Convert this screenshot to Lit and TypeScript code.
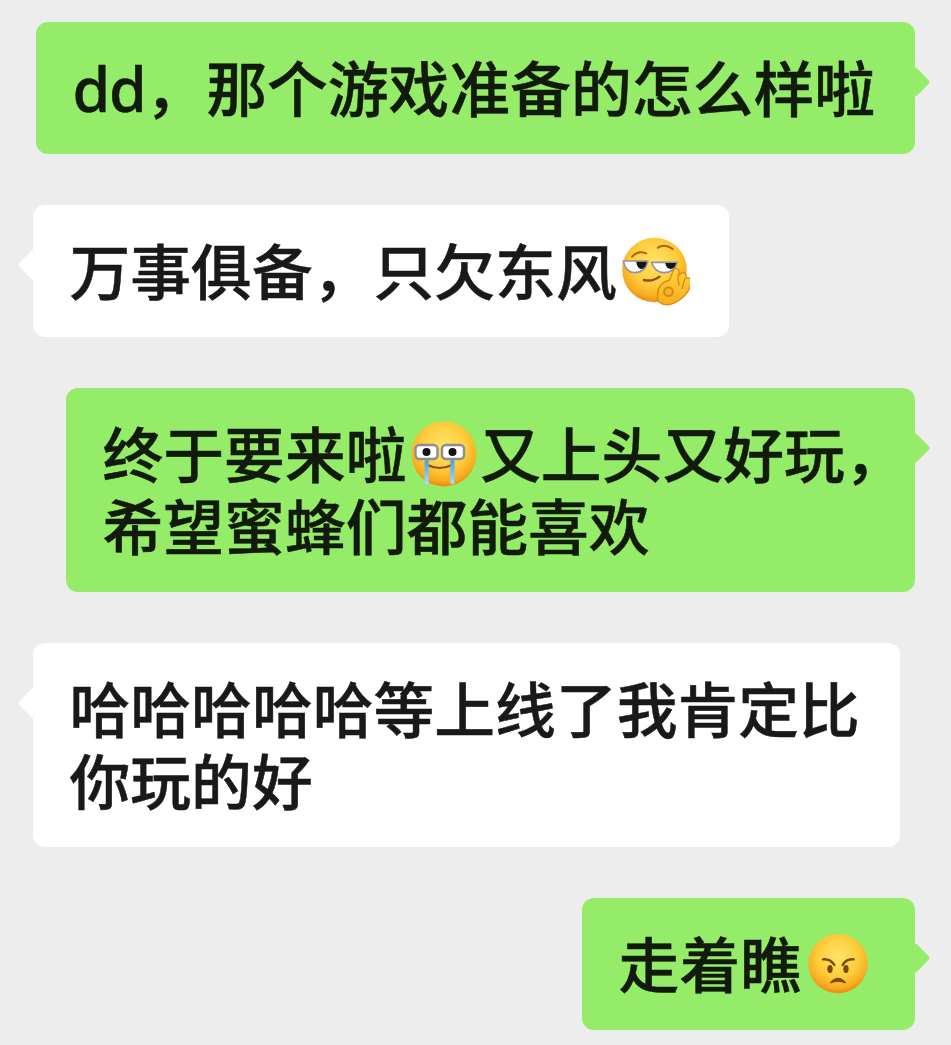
import { LitElement, html, css, svg } from "lit";
import { customElement } from "lit/decorators.js";

const defs = svg`
  <defs>
    <radialGradient id="face" cx="50%" cy="38%" r="60%">
      <stop offset="0" stop-color="#ffe56a"/>
      <stop offset="0.6" stop-color="#fdcb3a"/>
      <stop offset="0.88" stop-color="#f8ad20"/>
      <stop offset="1" stop-color="#ef9015"/>
    </radialGradient>
    <linearGradient id="hand" x1="0" y1="0" x2="0" y2="1">
      <stop offset="0" stop-color="#ffd23f"/>
      <stop offset="1" stop-color="#f8ae1c"/>
    </linearGradient>
    <linearGradient id="tear" x1="0" y1="0" x2="0" y2="1">
      <stop offset="0" stop-color="#4d9ee2"/>
      <stop offset="1" stop-color="#a6def8"/>
    </linearGradient>
  </defs>`;

const smirk = html`<svg class="e72" viewBox="0 0 72 72">${defs}
  <g transform="translate(-8.5 -12) scale(.3333)">
    <circle cx="135" cy="135" r="97" fill="url(#face)"/>
    <path d="M68 95q17-20 42-10" fill="none" stroke="#a8650f" stroke-width="6" stroke-linecap="round"/>
    <path d="M145 68q20-13 45 4" fill="none" stroke="#a8650f" stroke-width="6" stroke-linecap="round"/>
    <path d="M41 108h74q-8 35-40 35-26 0-34-35Z" fill="#fff" stroke="#94949a" stroke-width="5" stroke-linejoin="round"/>
    <path d="M80 110h32q-4 22-17 22-11 0-15-22Z" fill="#141414"/>
    <path d="M126 112h78q-10 31-40 31-28 0-38-31Z" fill="#fff" stroke="#94949a" stroke-width="5" stroke-linejoin="round"/>
    <path d="M167 114h33q-4 18-17 18-12 0-16-18Z" fill="#141414"/>
    <path d="M103 165q27 6 47-10" fill="none" stroke="#8a4f0c" stroke-width="7" stroke-linecap="round"/>
    <path d="M145 205C145 185 160 170 180 165L192 135Q200 125 208 135L210 150Q220 135 228 148L232 160Q245 155 245 172C243 195 225 215 210 225C190 240 165 245 150 232C143 225 143 215 145 205Z" fill="url(#hand)" stroke="#d98a10" stroke-width="4"/>
    <circle cx="177" cy="200" r="13" fill="#f4b02c" stroke="#d68a10" stroke-width="6"/>
    <path d="M205 150l3 30M226 160l-8 30" fill="none" stroke="#d98a10" stroke-width="4" stroke-linecap="round"/>
  </g>
</svg>`;

const cry = html`<svg class="e68" viewBox="0 0 68 68">${defs}
  <circle cx="34" cy="34" r="32.500" fill="url(#face)"/>
  <path d="M17.500 45q12 6 24.500 0" fill="none" stroke="#8a4f0c" stroke-width="2.200" stroke-linecap="round"/>
  <rect x="5.500" y="25" width="22" height="14" rx="4" fill="#fff" stroke="#8d8d95" stroke-width="2.400"/>
  <rect x="32" y="25" width="22" height="14" rx="4" fill="#fff" stroke="#8d8d95" stroke-width="2.400"/>
  <circle cx="16.500" cy="32" r="4" fill="#111"/>
  <circle cx="42.500" cy="32" r="4" fill="#111"/>
  <rect x="14.500" y="40" width="4.300" height="24" rx="1.500" fill="url(#tear)"/>
  <rect x="40.200" y="40" width="4.300" height="24" rx="1.500" fill="url(#tear)"/>
</svg>`;

const angry = html`<svg class="e64" viewBox="0 0 64 64">${defs}
  <g transform="translate(-11 -12) scale(.3333)">
    <circle cx="129" cy="131" r="89" fill="url(#face)"/>
    <path d="M84 118q22-2 34 17" fill="none" stroke="#7a4a05" stroke-width="7" stroke-linecap="round"/>
    <path d="M176 118q-22-2-33 17" fill="none" stroke="#7a4a05" stroke-width="7" stroke-linecap="round"/>
    <ellipse cx="105" cy="147" rx="8" ry="12" fill="#7a4a05"/>
    <ellipse cx="153" cy="147" rx="8" ry="12" fill="#7a4a05"/>
    <path d="M107 188q22-26 44 0q-22-10-44 0Z" fill="#7a4a05" stroke="#7a4a05" stroke-width="4" stroke-linejoin="round"/>
  </g>
</svg>`;

@customElement("app-root")
export class AppRoot extends LitElement {
  static styles = css`
    :host {
      display: flex;
      flex-direction: column;
      align-items: flex-start;
      gap: 51px;
      box-sizing: border-box;
      width: 951px;
      height: 1045px;
      padding: 22px 36px 0 33px;
      background: #ededed;
      font-family: "Noto Sans", "Noto Sans CJK SC", sans-serif;
      font-size: 60.8px;
      font-weight: 500;
      line-height: 72px;
      color: #191919;
      -webkit-text-stroke: 0.5px currentColor;
      overflow: hidden;
    }
    .bubble {
      position: relative;
      box-sizing: border-box;
      padding: 31px 40px 29px 36.5px;
      border-radius: 12px;
      background: #fff;
      white-space: nowrap;
    }
    .me {
      align-self: flex-end;
      background: #95ec69;
      color: #111a0b;
    }
    .tail {
      position: absolute;
      top: 49px;
      left: -11px;
      width: 22px;
      height: 22px;
      border-radius: 3px;
      background: inherit;
      transform: rotate(45deg);
    }
    .me .tail {
      left: auto;
      right: -11px;
    }
    .emoji {
      display: inline-flex;
      align-items: flex-start;
      height: 72px;
      vertical-align: top;
    }
    svg { display: block; }
    .w72 { width: 72.3px; }
    .w73 { width: 73.5px; }
    .w74 { width: 74px; }
    .e72 { flex: none; width: 72px; height: 72px; margin: 1px 0 0 1.8px; }
    .e68 { flex: none; width: 68px; height: 68px; margin: 1px 0 0 4px; }
    .e64 { flex: none; width: 64px; height: 64px; margin: 3px 0 0 5px; }
    .dd { letter-spacing: -1.2px; }
    .hang { margin-right: -30.6px; }
  `;

  render() {
    return html`
      <div class="bubble me"><i class="tail"></i><span class="dd">dd</span>，那个游戏准备的怎么样啦</div>
      <div class="bubble"><i class="tail"></i>万事俱备，只欠东风<span class="emoji w72">${smirk}</span></div>
      <div class="bubble me"><i class="tail"></i>终于要来啦<span class="emoji w73">${cry}</span>又上头又好玩<span class="hang">，</span><br />希望蜜蜂们都能喜欢</div>
      <div class="bubble"><i class="tail"></i>哈哈哈哈哈等上线了我肯定比<br />你玩的好</div>
      <div class="bubble me"><i class="tail"></i>走着瞧<span class="emoji w74">${angry}</span></div>
    `;
  }
}
